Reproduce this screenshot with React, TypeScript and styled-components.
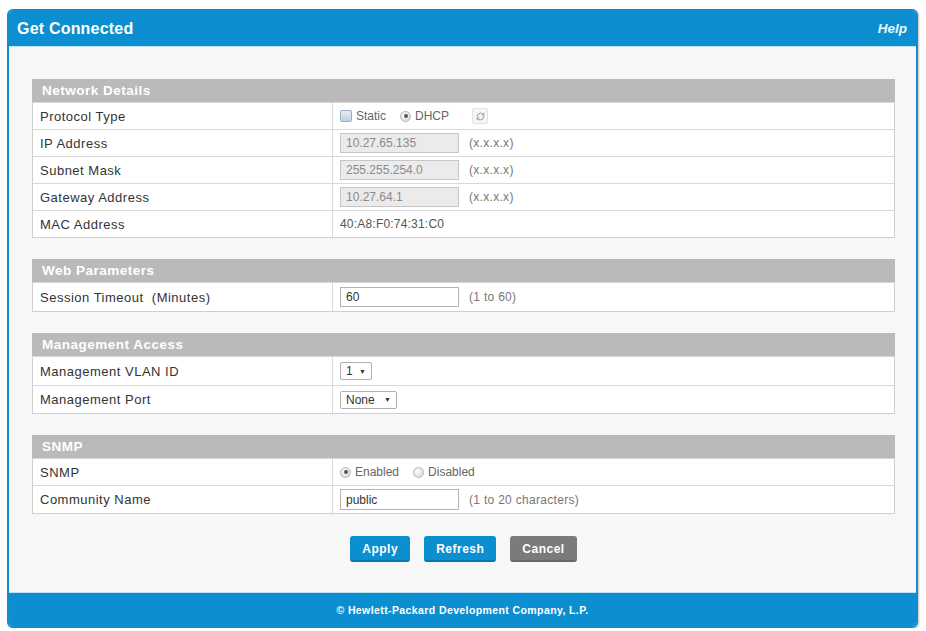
import React from 'react';
import styled, { createGlobalStyle } from 'styled-components';
import { RefreshCw } from 'lucide-react';

const GlobalStyle = createGlobalStyle`
    body {
        margin: 0;
        background: #ffffff;
        font-family: "Liberation Sans", Arial, sans-serif;
        color: #333;
    }
`;

const Panel = styled.div`
    box-sizing: border-box;
    margin: 9px 0 0 7px;
    width: 911px;
    height: 619px;
    border: 2px solid #138dcd;
    border-radius: 6px;
    overflow: hidden;
    background: #f7f7f7;
    box-shadow: 1px 1px 2px rgba(0, 0, 0, 0.25);
    display: flex;
    flex-direction: column;
`;

const TitleBar = styled.div`
    height: 35px;
    flex: none;
    background: #0b8fd0;
    border-bottom: 1px solid #bfe3f5;
    padding: 0 9px 0 8px;
    display: flex;
    align-items: center;
    justify-content: space-between;
    color: #fff;
`;

const Title = styled.div`
    font-size: 16px;
    font-weight: bold;
    letter-spacing: 0.2px;
`;

const HelpLink = styled.a`
    font-size: 13.5px;
    font-weight: bold;
    font-style: italic;
    color: #e8f6ff;
    text-decoration: none;
`;

const Body = styled.div`
    flex: 1;
    padding: 32px 21px 0 23px;
    display: flex;
    flex-direction: column;
    gap: 21px;
`;

const Section = styled.section`
    display: flex;
    flex-direction: column;
`;

const SectionHeader = styled.div`
    box-sizing: border-box;
    height: 24px;
    background: #bababa;
    color: #fff;
    font-size: 13.5px;
    font-weight: bold;
    letter-spacing: 0.5px;
    padding-left: 10px;
    display: flex;
    align-items: center;
    border-bottom: 1px solid #d6d6d6;
`;

const Table = styled.div`
    background: #fff;
    border: 1px solid #cfcfcf;
    border-top: none;
`;

const Row = styled.div<{ $h: number }>`
    display: grid;
    grid-template-columns: 300px 1fr;
    height: ${p => p.$h}px;
    border-bottom: 1px solid #d9d9d9;
    &:last-child {
        border-bottom: none;
    }
`;

const Label = styled.div`
    padding-left: 7px;
    font-size: 13px;
    letter-spacing: 0.5px;
    color: #333;
    display: flex;
    align-items: center;
    border-right: 1px solid #dcdcdc;
`;

const Value = styled.div`
    padding-left: 7px;
    display: flex;
    align-items: center;
    gap: 10px;
    font-size: 12px;
    color: #555;
`;

const Plain = styled.span`
    font-size: 12px;
    color: #555;
    letter-spacing: 0.2px;
`;

const Hint = styled.span`
    font-size: 12px;
    color: #777;
    letter-spacing: 0.3px;
`;

const Choice = styled.label`
    display: flex;
    align-items: center;
    gap: 4px;
    font-size: 12px;
    color: #666;
    margin-right: 4px;
`;

const Check = styled.span`
    box-sizing: border-box;
    width: 12px;
    height: 12px;
    border: 1px solid #98afc6;
    background: linear-gradient(#e4ecf4, #c3d2e1);
    border-radius: 2px;
`;

const Radio = styled.span<{ $on?: boolean }>`
    box-sizing: border-box;
    position: relative;
    width: 11px;
    height: 11px;
    border-radius: 50%;
    border: 1px solid #b5b5b5;
    background: radial-gradient(circle at 40% 35%, #fff, #d0d0d0);
    &::after {
        content: '';
        display: ${p => (p.$on ? 'block' : 'none')};
        position: absolute;
        left: 2.5px;
        top: 2.5px;
        width: 4px;
        height: 4px;
        border-radius: 50%;
        background: #555;
    }
`;

const IconBox = styled.span`
    box-sizing: border-box;
    width: 16px;
    height: 16px;
    margin-left: 9px;
    border: 1px solid #e2e2e2;
    border-radius: 2px;
    background: #f6f6f6;
    display: flex;
    align-items: center;
    justify-content: center;
    color: #999;
`;

const TextBox = styled.input<{ $locked?: boolean; $h?: number }>`
    box-sizing: border-box;
    width: 119px;
    height: ${p => p.$h ?? 20}px;
    margin: 0;
    padding: 0 5px;
    font-family: "Liberation Sans", Arial, sans-serif;
    font-size: 12px;
    color: ${p => (p.$locked ? '#8a8a8a' : '#333')};
    background: ${p => (p.$locked ? '#ebebeb' : '#fff')};
    border: 1px solid ${p => (p.$locked ? '#c6c6c6' : '#b3b3b3')};
    outline: none;
`;

const Select = styled.span<{ $w: number }>`
    box-sizing: border-box;
    width: ${p => p.$w}px;
    height: 18px;
    padding: 0 5px;
    border: 1px solid #b0b0b0;
    border-radius: 2px;
    background: #fff;
    display: flex;
    align-items: center;
    justify-content: space-between;
    font-size: 12px;
    color: #333;
    &::after {
        content: '▼';
        font-size: 7px;
        color: #333;
    }
`;

const ButtonRow = styled.div`
    margin-top: 1px;
    display: flex;
    justify-content: center;
    gap: 14px;
`;

const Button = styled.button<{ $grey?: boolean }>`
    height: 26px;
    padding: 0 12px;
    border: none;
    border-radius: 3px;
    background: ${p => (p.$grey ? '#7b7b7b' : '#0b8fd0')};
    box-shadow: inset 0 -2px 0 rgba(0, 0, 0, 0.15);
    color: #fff;
    font-family: "Liberation Sans", Arial, sans-serif;
    font-size: 12px;
    font-weight: bold;
    letter-spacing: 0.5px;
`;

const Footer = styled.div`
    height: 33px;
    flex: none;
    background: #0b8fd0;
    border-top: 1px solid #bfe3f5;
    color: #fff;
    font-size: 10.5px;
    font-weight: bold;
    letter-spacing: 0.4px;
    display: flex;
    align-items: center;
    justify-content: center;
`;

const App: React.FC = () => {
    return (
        <>
            <GlobalStyle />
            <Panel>
                <TitleBar>
                    <Title>Get Connected</Title>
                    <HelpLink href="#">Help</HelpLink>
                </TitleBar>
                <Body>
                    <Section>
                        <SectionHeader>Network Details</SectionHeader>
                        <Table>
                            <Row $h={26}>
                                <Label>Protocol Type</Label>
                                <Value>
                                    <Choice><Check />Static</Choice>
                                    <Choice><Radio $on />DHCP</Choice>
                                    <IconBox><RefreshCw size={9} strokeWidth={2.5} /></IconBox>
                                </Value>
                            </Row>
                            <Row $h={26}>
                                <Label>IP Address</Label>
                                <Value>
                                    <TextBox $locked readOnly value="10.27.65.135" />
                                    <Hint>(x.x.x.x)</Hint>
                                </Value>
                            </Row>
                            <Row $h={26}>
                                <Label>Subnet Mask</Label>
                                <Value>
                                    <TextBox $locked readOnly value="255.255.254.0" />
                                    <Hint>(x.x.x.x)</Hint>
                                </Value>
                            </Row>
                            <Row $h={26}>
                                <Label>Gateway Address</Label>
                                <Value>
                                    <TextBox $locked readOnly value="10.27.64.1" />
                                    <Hint>(x.x.x.x)</Hint>
                                </Value>
                            </Row>
                            <Row $h={26}>
                                <Label>MAC Address</Label>
                                <Value><Plain>40:A8:F0:74:31:C0</Plain></Value>
                            </Row>
                        </Table>
                    </Section>

                    <Section>
                        <SectionHeader>Web Parameters</SectionHeader>
                        <Table>
                            <Row $h={28}>
                                <Label>Session Timeout&nbsp; (Minutes)</Label>
                                <Value>
                                    <TextBox readOnly value="60" />
                                    <Hint>(1 to 60)</Hint>
                                </Value>
                            </Row>
                        </Table>
                    </Section>

                    <Section>
                        <SectionHeader>Management Access</SectionHeader>
                        <Table>
                            <Row $h={28}>
                                <Label>Management VLAN ID</Label>
                                <Value><Select $w={32}>1</Select></Value>
                            </Row>
                            <Row $h={27}>
                                <Label>Management Port</Label>
                                <Value><Select $w={57}>None</Select></Value>
                            </Row>
                        </Table>
                    </Section>

                    <Section>
                        <SectionHeader>SNMP</SectionHeader>
                        <Table>
                            <Row $h={26}>
                                <Label>SNMP</Label>
                                <Value>
                                    <Choice><Radio $on />Enabled</Choice>
                                    <Choice><Radio />Disabled</Choice>
                                </Value>
                            </Row>
                            <Row $h={27}>
                                <Label>Community Name</Label>
                                <Value>
                                    <TextBox readOnly value="public" $h={21} />
                                    <Hint>(1 to 20 characters)</Hint>
                                </Value>
                            </Row>
                        </Table>
                    </Section>

                    <ButtonRow>
                        <Button>Apply</Button>
                        <Button>Refresh</Button>
                        <Button $grey>Cancel</Button>
                    </ButtonRow>
                </Body>
                <Footer>© Hewlett-Packard Development Company, L.P.</Footer>
            </Panel>
        </>
    );
};

export default App;
